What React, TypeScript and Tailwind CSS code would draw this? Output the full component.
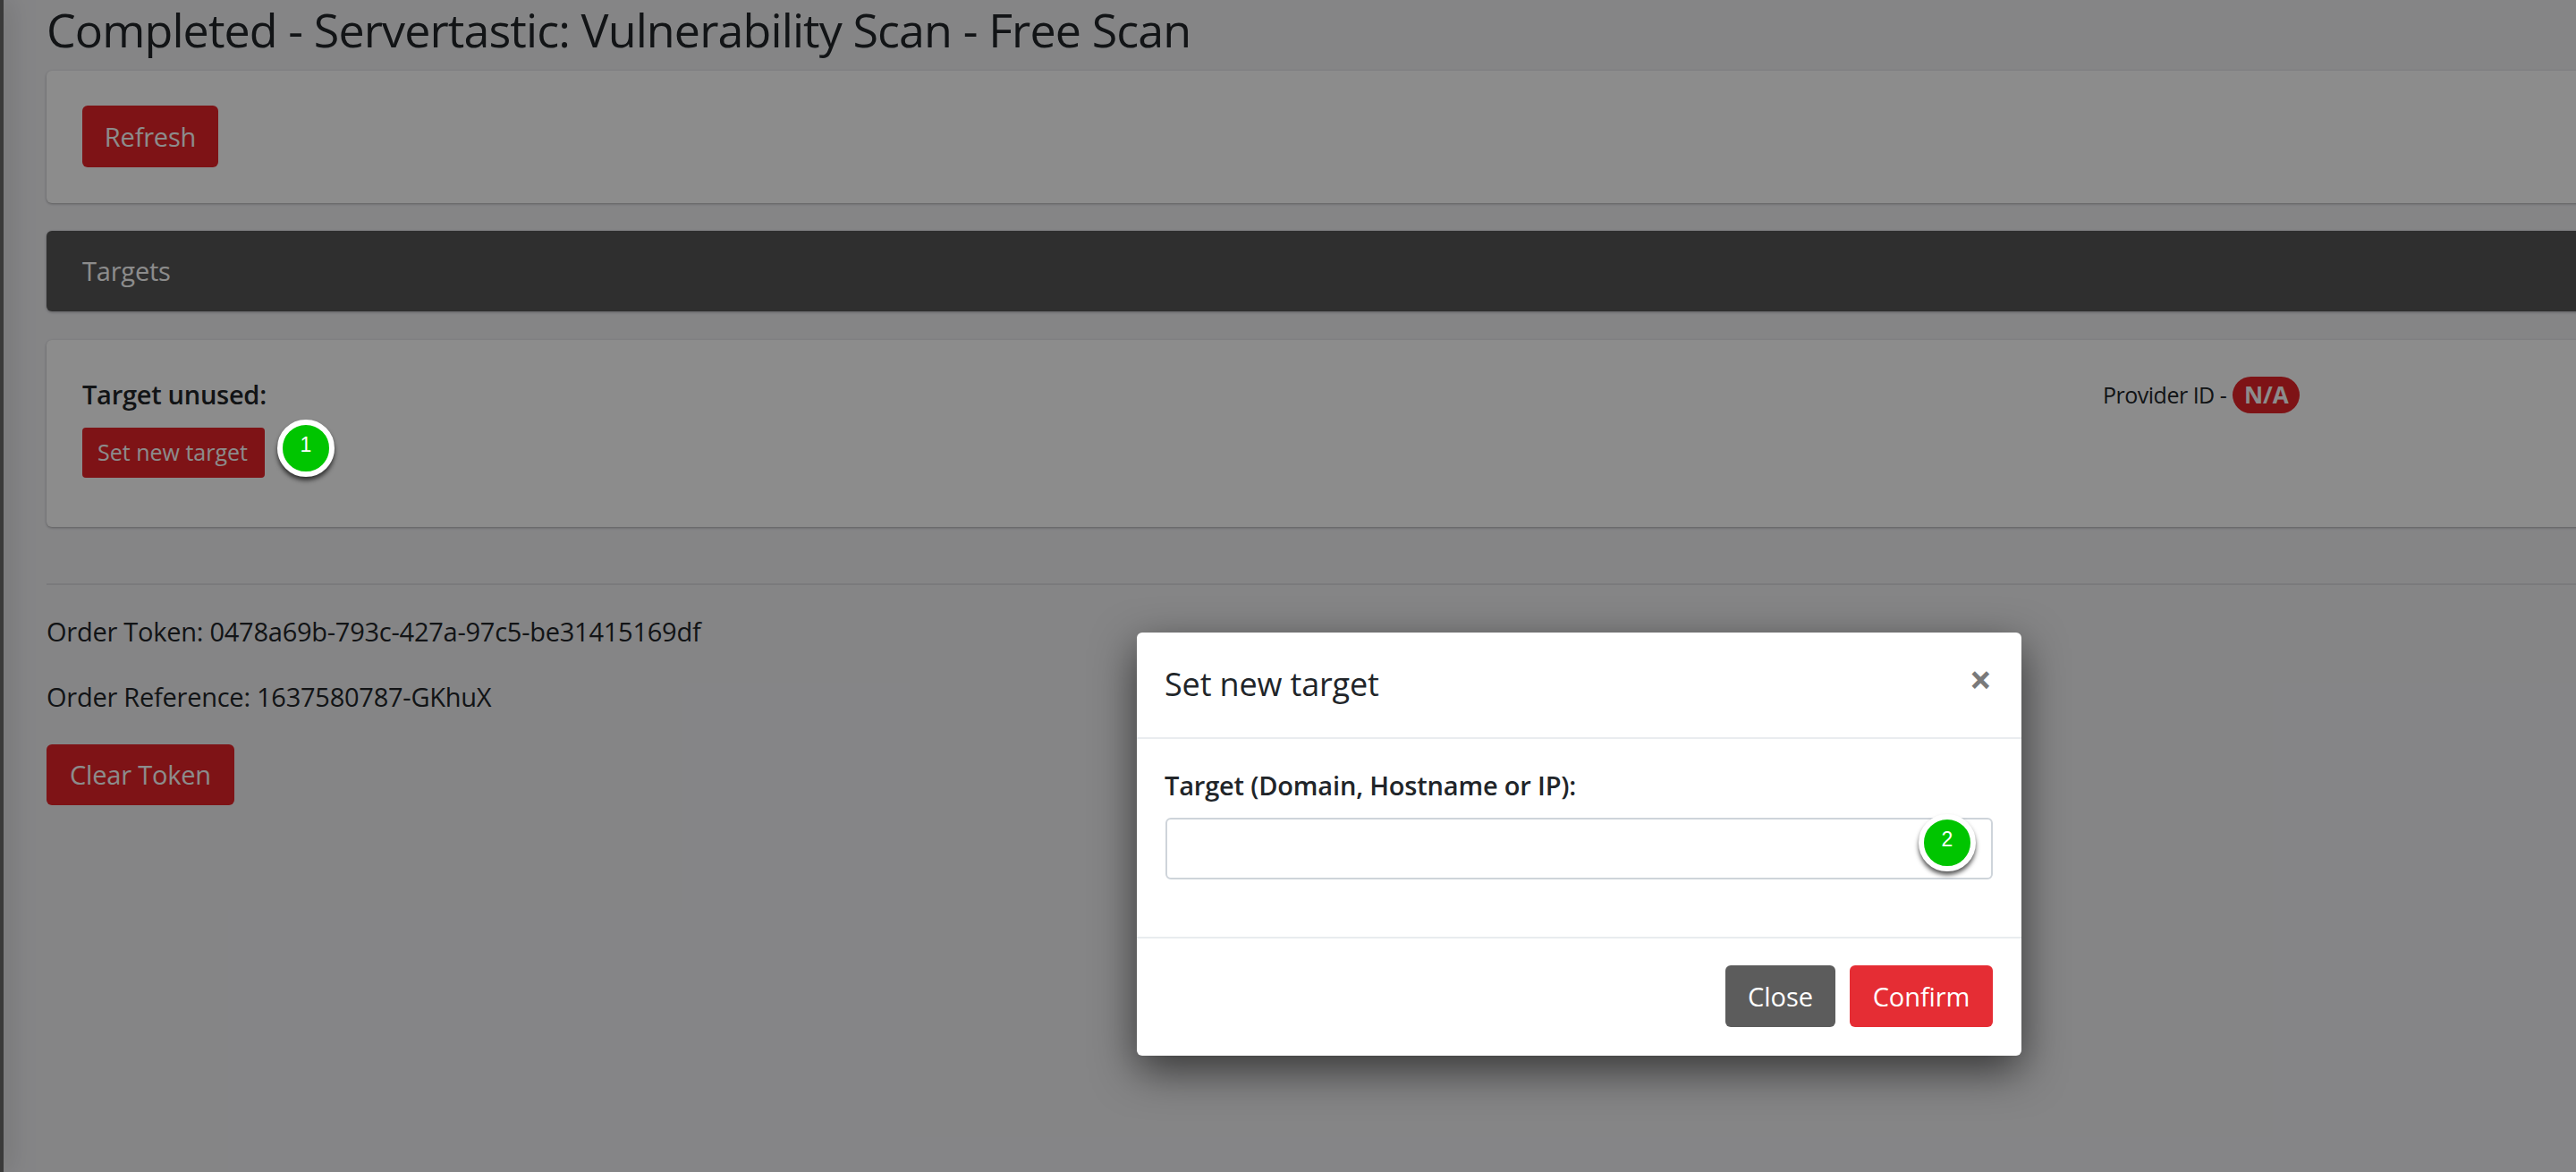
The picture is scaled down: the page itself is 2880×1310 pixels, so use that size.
import React from 'react';

const Marker = ({ label, className }: { label: string; className: string }) => (
  <div
    className={`absolute w-[64px] h-[64px] rounded-full bg-[#00c500] border-[6px] border-white shadow-[0_4px_5px_rgba(0,0,0,0.65)] flex items-center justify-center pb-[8px] text-white text-[23px] font-['Liberation_Sans',sans-serif] ${className}`}
  >
    {label}
  </div>
);

const App = () => {
  return (
    <div className="relative h-[1310px] overflow-hidden flex bg-[#f2f2f5] text-[#212529] font-['Open_Sans',sans-serif]">
      <div className="w-[4px] shrink-0 bg-[#6a6a6a] shadow-[0_0_30px_rgba(0,0,0,0.6)]" />

      <main className="flex-1 pl-[48px] -mr-[24px]">
        <h1 className="text-[52px] leading-[66px] tracking-[-0.9px] mb-[13px]">
          Completed - Servertastic: Vulnerability Scan - Free Scan
        </h1>

        <div className="bg-white rounded-[6px] shadow-[0_1px_3px_rgba(0,0,0,0.3)] px-[40px] pt-[39px] pb-[40px] mb-[31px]">
          <button className="h-[69px] w-[152px] rounded-[6px] bg-[#e62429] text-white text-[29px] tracking-[-0.2px]">Refresh</button>
        </div>

        <div className="h-[90px] bg-[#575757] rounded-[6px] shadow-[0_1px_3px_rgba(0,0,0,0.3)] px-[40px] flex items-center text-white text-[29px] tracking-[-0.2px] mb-[32px]">
          Targets
        </div>

        <div className="bg-white rounded-[6px] shadow-[0_1px_3px_rgba(0,0,0,0.3)] px-[40px] pt-[41px] pb-[55px] flex">
          <div className="w-[2259px]">
            <div className="text-[29px] leading-[40px] font-semibold tracking-[-0.27px] mb-[17px]">Target unused:</div>
            <button className="h-[56px] w-[204px] rounded-[4px] bg-[#e62429] text-white text-[25px] pr-[2px]">Set new target</button>
          </div>
          <div className="flex items-center h-[41px] gap-[7px] text-[25px]">
            <span className="tracking-[-0.5px]">Provider ID -</span>
            <span className="h-[41px] w-[75px] rounded-full bg-[#e62429] text-white text-[26px] font-bold flex items-center justify-center">N/A</span>
          </div>
        </div>

        <hr className="mt-[63px] mb-[30px] border-0 border-t-[2px] border-[#dfdfe2]" />

        <p className="text-[29px] leading-[44px] tracking-[-0.25px] mb-[29px]">Order Token: 0478a69b-793c-427a-97c5-be31415169df</p>
        <p className="text-[29px] leading-[44px] tracking-[-0.25px] mb-[31px]">Order Reference: 1637580787-GKhuX</p>
        <button className="h-[68px] w-[210px] rounded-[6px] bg-[#e62429] text-white text-[29px] tracking-[-0.2px]">Clear Token</button>
      </main>

      {/* dim layer, modal and step markers sit on top of the page */}
      <div className="absolute inset-0 bg-black/45" />

      <Marker label="1" className="left-[310px] top-[469px]" />

      <div className="absolute left-[1271px] top-[707px] w-[989px] bg-white rounded-[6px] shadow-[0_16px_48px_rgba(0,0,0,0.6)]">
        <div className="h-[119px] px-[31px] pb-[2px] flex items-center justify-between border-b-[2px] border-[#e9ecef]">
          <span className="text-[36px] tracking-[-0.15px]">Set new target</span>
          <span className="text-[#7a7a7a] text-[44px] font-bold leading-none -mt-[11px] mr-[2px]">×</span>
        </div>

        <div className="px-[32px] pt-[32px] pb-[64px] relative">
          <label className="block text-[29px] leading-[40px] font-semibold tracking-[-0.18px] -ml-[1px] mb-[16px]">Target (Domain, Hostname or IP):</label>
          <input className="block w-full h-[69px] rounded-[6px] border-[2px] border-[#ced4da] bg-white" />
          <Marker label="2" className="right-[51px] top-[84px]" />
        </div>

        <div className="border-t-[2px] border-[#e9ecef] px-[32px] pt-[30px] pb-[32px] flex justify-end gap-[16px]">
          <button className="h-[69px] w-[123px] rounded-[6px] bg-[#5c5c5c] text-white text-[29px]">Close</button>
          <button className="h-[69px] w-[160px] rounded-[6px] bg-[#e52d34] text-white text-[29px] tracking-[-0.1px]">Confirm</button>
        </div>
      </div>
    </div>
  );
};

export default App;
